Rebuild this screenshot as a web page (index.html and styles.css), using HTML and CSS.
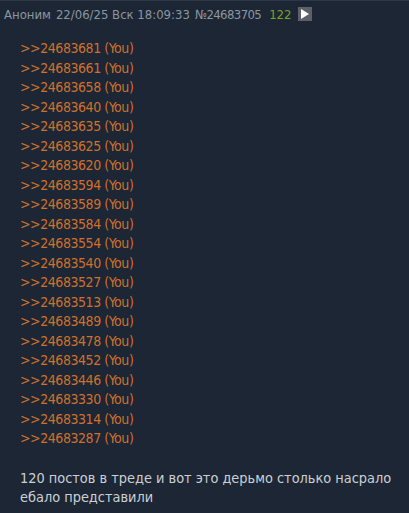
FILE: index.html
```html
<!DOCTYPE html>
<html lang="ru">
<head>
  <meta charset="UTF-8">
  <meta name="viewport" content="width=device-width, initial-scale=1.0">
  <title>Пост</title>
  <link rel="stylesheet" href="styles.css">
</head>
<body>
  <div class="post">
    <div class="post-details">
      <span class="post-name">Аноним</span>
      <span class="post-time">22/06/25 Вск 18:09:33</span>
      <span class="post-num">№24683705</span>
      <span class="post-count">122</span>
      <span class="post-btn">
        <svg width="8" height="10" viewBox="0 0 8 10"><path d="M0 0 L8 5 L0 10 Z" fill="#fff"/></svg>
      </span>
    </div>
    <div class="post-text">
      <div class="replies">
        <a href="#">&gt;&gt;24683681 (You)</a>
        <a href="#">&gt;&gt;24683661 (You)</a>
        <a href="#">&gt;&gt;24683658 (You)</a>
        <a href="#">&gt;&gt;24683640 (You)</a>
        <a href="#">&gt;&gt;24683635 (You)</a>
        <a href="#">&gt;&gt;24683625 (You)</a>
        <a href="#">&gt;&gt;24683620 (You)</a>
        <a href="#">&gt;&gt;24683594 (You)</a>
        <a href="#">&gt;&gt;24683589 (You)</a>
        <a href="#">&gt;&gt;24683584 (You)</a>
        <a href="#">&gt;&gt;24683554 (You)</a>
        <a href="#">&gt;&gt;24683540 (You)</a>
        <a href="#">&gt;&gt;24683527 (You)</a>
        <a href="#">&gt;&gt;24683513 (You)</a>
        <a href="#">&gt;&gt;24683489 (You)</a>
        <a href="#">&gt;&gt;24683478 (You)</a>
        <a href="#">&gt;&gt;24683452 (You)</a>
        <a href="#">&gt;&gt;24683446 (You)</a>
        <a href="#">&gt;&gt;24683330 (You)</a>
        <a href="#">&gt;&gt;24683314 (You)</a>
        <a href="#">&gt;&gt;24683287 (You)</a>
      </div>
      <p class="message">120 постов в треде и вот это дерьмо столько насрало ебало представили</p>
    </div>
  </div>
</body>
</html>
```

FILE: styles.css
```css
* {
  margin: 0;
  padding: 0;
  box-sizing: border-box;
}

body {
  background: #1c2634;
  font-family: "DejaVu Sans Condensed", "DejaVu Sans", sans-serif;
  font-stretch: condensed;
  color: #c9ced3;
  height: 100vh;
  overflow: hidden;
}

.post {
  border-top: 1px solid #2b3746;
}

.post-details {
  display: flex;
  align-items: center;
  gap: 5px;
  height: 26px;
  padding: 0 4px;
  font-size: 13px;
  color: #8c96a1;
}

.post-num {
  letter-spacing: -0.6px;
}

.post-count {
  color: #79a325;
  margin-left: 3px;
}

.post-btn {
  display: flex;
  align-items: center;
  justify-content: center;
  width: 14px;
  height: 14px;
  margin-left: 1px;
  background: #5d6167;
}

.post-text {
  padding: 12px 6px 0 20px;
  font-size: 14px;
  line-height: 19.5px;
}

.replies a {
  display: block;
  color: #d0702d;
  text-decoration: none;
  letter-spacing: -0.45px;
}

.message {
  margin-top: 20px;
  font-size: 14.4px;
  color: #cbd0d5;
}
```
